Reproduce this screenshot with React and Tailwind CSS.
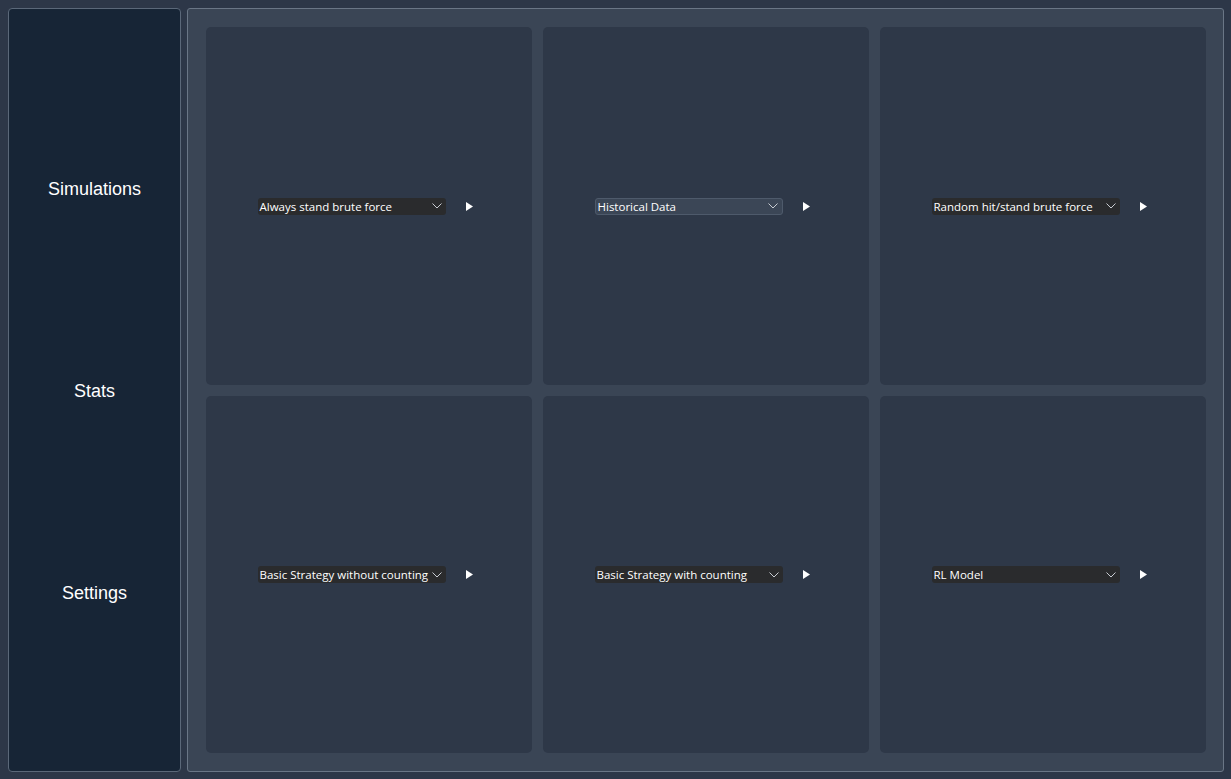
import React from "react";

function Chevron() {
  return (
    <svg width="10" height="6" viewBox="0 0 10 6" className="shrink-0">
      <path d="M0.5 0.5 L5 5 L9.5 0.5" fill="none" stroke="#c8ccd2" strokeWidth="1" />
    </svg>
  );
}

function Play() {
  return (
    <svg width="8" height="9" viewBox="0 0 8 9" className="shrink-0">
      <path d="M0 0 L7 4.5 L0 9 Z" fill="#ffffff" />
    </svg>
  );
}

function Card({ label, active }) {
  return (
    <div className="bg-[#2e3848] rounded-[5px] flex items-center justify-center">
      <div className="flex items-center gap-[20px] ml-[-7px] mt-[1px]">
        <div
          className={
            "w-[188px] h-[17px] rounded-[3px] flex items-center justify-between pl-[2px] pr-[4px] text-[11.5px] text-white " +
            (active ? "bg-[#3b4656] border border-[#4e5a6b]" : "bg-[#2a2b2d]")
          }
          style={{ fontFamily: '"Open Sans", "Noto Sans", sans-serif' }}
        >
          <span className="whitespace-nowrap leading-none">{label}</span>
          <Chevron />
        </div>
        <Play />
      </div>
    </div>
  );
}

export default function App() {
  const items = [
    ["Always stand brute force", false],
    ["Historical Data", true],
    ["Random hit/stand brute force", false],
    ["Basic Strategy without counting", false],
    ["Basic Strategy with counting", false],
    ["RL Model", false],
  ];
  return (
    <div className="w-[1231px] h-[779px] bg-[#2d3748] pl-[8px] pt-[8px] pr-[7px] pb-[7px] flex gap-[6px]">
      <div
        className="w-[173px] h-full bg-[#172536] border border-[#5b6879] rounded-[4px] flex flex-col items-center justify-center pt-[2px] text-white text-[18px]"
        style={{ fontFamily: '"Liberation Sans", Arial, sans-serif' }}
      >
        <div className="h-[202px] flex items-center">Simulations</div>
        <div className="h-[202px] flex items-center">Stats</div>
        <div className="h-[202px] flex items-center">Settings</div>
      </div>
      <div className="flex-1 h-full bg-[#3a4555] border border-[#6a7686] rounded-[3px] p-[18px] pr-[17px] grid grid-cols-3 grid-rows-2 gap-[11px]">
        {items.map(([l, a]) => (
          <Card key={l} label={l} active={a} />
        ))}
      </div>
    </div>
  );
}
